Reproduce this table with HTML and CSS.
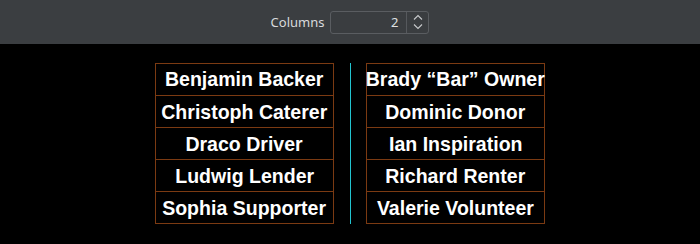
FILE: index.html
```html
<!DOCTYPE html>
<html>
<head>
<meta charset="utf-8">
<link rel="stylesheet" href="styles.css">
</head>
<body>
<div class="toolbar">
  <label class="field-label">Columns</label>
  <div class="spin">
    <span class="spin-value">2</span>
    <span class="spin-arrows">
      <svg width="12" height="18" viewBox="0 0 12 18"><path d="M2 6.5 L6 2.5 L10 6.5" fill="none" stroke="#c8cacc" stroke-width="1.1"/><path d="M2 11.5 L6 15.5 L10 11.5" fill="none" stroke="#c8cacc" stroke-width="1.1"/></svg>
    </span>
  </div>
</div>
<main class="stage">
  <div class="columns">
    <ul class="names">
      <li><span>Benjamin Backer</span></li>
      <li><span>Christoph Caterer</span></li>
      <li><span>Draco Driver</span></li>
      <li><span>Ludwig Lender</span></li>
      <li><span>Sophia Supporter</span></li>
    </ul>
    <div class="rule"></div>
    <ul class="names">
      <li><span>Brady “Bar” Owner</span></li>
      <li><span>Dominic Donor</span></li>
      <li><span>Ian Inspiration</span></li>
      <li><span>Richard Renter</span></li>
      <li><span>Valerie Volunteer</span></li>
    </ul>
  </div>
</main>
</body>
</html>
```
FILE: styles.css
```css
html, body {
  margin: 0;
  padding: 0;
  background: #000;
  width: 700px;
  height: 244px;
  overflow: hidden;
}

.toolbar {
  height: 44px;
  background: #3b3e41;
  display: flex;
  align-items: center;
  justify-content: center;
  gap: 6px;
}

.field-label {
  font-family: "Noto Sans", "Open Sans", sans-serif;
  font-size: 13px;
  color: #d8dadc;
}

.spin {
  width: 99px;
  height: 23px;
  box-sizing: border-box;
  border: 1px solid #5a5d61;
  border-radius: 3px;
  background: #3a3d40;
  display: flex;
  align-items: stretch;
}

.spin-value {
  flex: 1;
  text-align: right;
  padding-right: 8px;
  font-family: "Noto Sans", "Open Sans", sans-serif;
  font-size: 13px;
  line-height: 21px;
  color: #dfe1e3;
}

.spin-arrows {
  width: 21px;
  border-left: 1px solid #56595d;
  display: flex;
  align-items: center;
  justify-content: center;
}

.stage {
  display: flex;
  justify-content: center;
  padding-top: 19px;
}

.columns {
  display: flex;
  align-items: stretch;
}

.names {
  list-style: none;
  margin: 0;
  padding: 0;
  width: 179px;
  border: 1px solid #7b3a12;
  box-sizing: border-box;
}

.names li {
  height: 32px;
  box-sizing: border-box;
  border-top: 1px solid #7b3a12;
  display: flex;
  justify-content: center;
  font-family: "Liberation Sans", Arial, sans-serif;
  font-weight: bold;
  font-size: 21px;
  line-height: 31px;
  color: #fff;
  white-space: nowrap;
}

.names li span {
  display: inline-block;
  transform: scaleX(0.93);
}

.names li:first-child {
  border-top: none;
  height: 31px;
  line-height: 30px;
}

.rule {
  width: 1px;
  background: #22c4d0;
  margin: 0 15px 0 16px;
}
```
